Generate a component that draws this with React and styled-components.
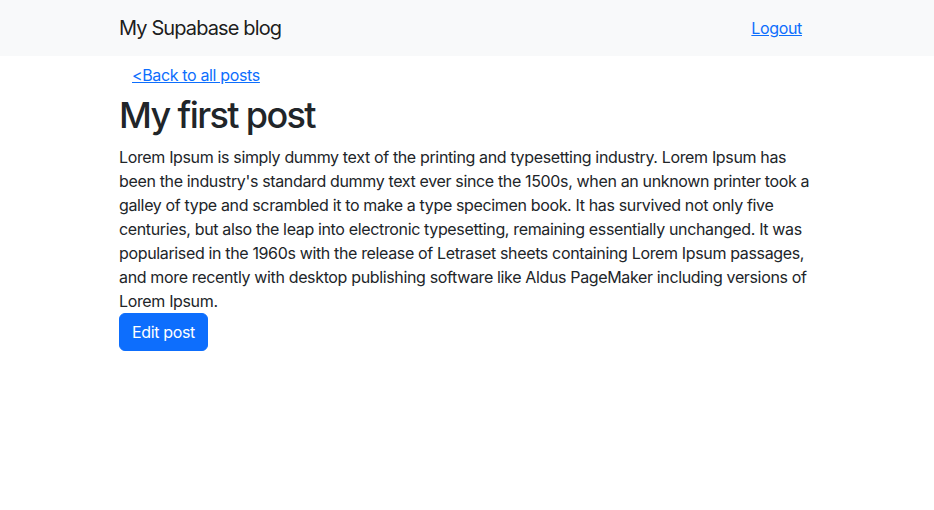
import styled, { createGlobalStyle } from 'styled-components';

const GlobalStyle = createGlobalStyle`
  * {
    margin: 0;
    padding: 0;
    box-sizing: border-box;
  }

  body {
    font-family: Inter, "Noto Sans", "Liberation Sans", sans-serif;
    font-size: 16px;
    line-height: 1.5;
    letter-spacing: -0.022em;
    color: #212529;
    background-color: #fff;
  }
`;

const Navbar = styled.nav`
  background-color: #f8f9fa;
  padding: 8px 0;
`;

const Container = styled.div`
  max-width: 720px;
  margin: 0 auto;
  padding: 0 12px;
`;

const NavContainer = styled(Container)`
  display: flex;
  align-items: center;
  justify-content: space-between;
`;

const Brand = styled.a`
  font-size: 20px;
  line-height: 30px;
  letter-spacing: -0.044em;
  padding: 5px 0;
  color: rgba(0, 0, 0, 0.9);
  text-decoration: none;
`;

const LinkButton = styled.a`
  display: inline-block;
  padding: 6px 12px;
  font-size: 16px;
  line-height: 24px;
  border: 1px solid transparent;
  color: #0d6efd;
  text-decoration: underline;
  cursor: pointer;
`;

const Title = styled.h1`
  font-size: 36px;
  font-weight: 500;
  line-height: 1.2;
  letter-spacing: -0.045em;
  margin-bottom: 8px;
`;

const Body = styled.p`
  font-size: 16px;
  line-height: 24px;
`;

const PrimaryButton = styled.button`
  display: inline-block;
  font-family: inherit;
  font-size: 16px;
  line-height: 24px;
  letter-spacing: inherit;
  padding: 6px 12px;
  color: #fff;
  background-color: #0d6efd;
  border: 1px solid #0d6efd;
  border-radius: 6px;
  cursor: pointer;
`;

const post = {
  title: 'My first post',
  content:
    "Lorem Ipsum is simply dummy text of the printing and typesetting industry. Lorem Ipsum has been the industry's standard dummy text ever since the 1500s, when an unknown printer took a galley of type and scrambled it to make a type specimen book. It has survived not only five centuries, but also the leap into electronic typesetting, remaining essentially unchanged. It was popularised in the 1960s with the release of Letraset sheets containing Lorem Ipsum passages, and more recently with desktop publishing software like Aldus PageMaker including versions of Lorem Ipsum.",
};

export default function App() {
  return (
    <>
      <GlobalStyle />
      <Navbar>
        <NavContainer>
          <Brand href="#">My Supabase blog</Brand>
          <LinkButton>Logout</LinkButton>
        </NavContainer>
      </Navbar>
      <Container>
        <LinkButton>&lt;Back to all posts</LinkButton>
        <Title>{post.title}</Title>
        <Body>{post.content}</Body>
        <PrimaryButton>Edit post</PrimaryButton>
      </Container>
    </>
  );
}
